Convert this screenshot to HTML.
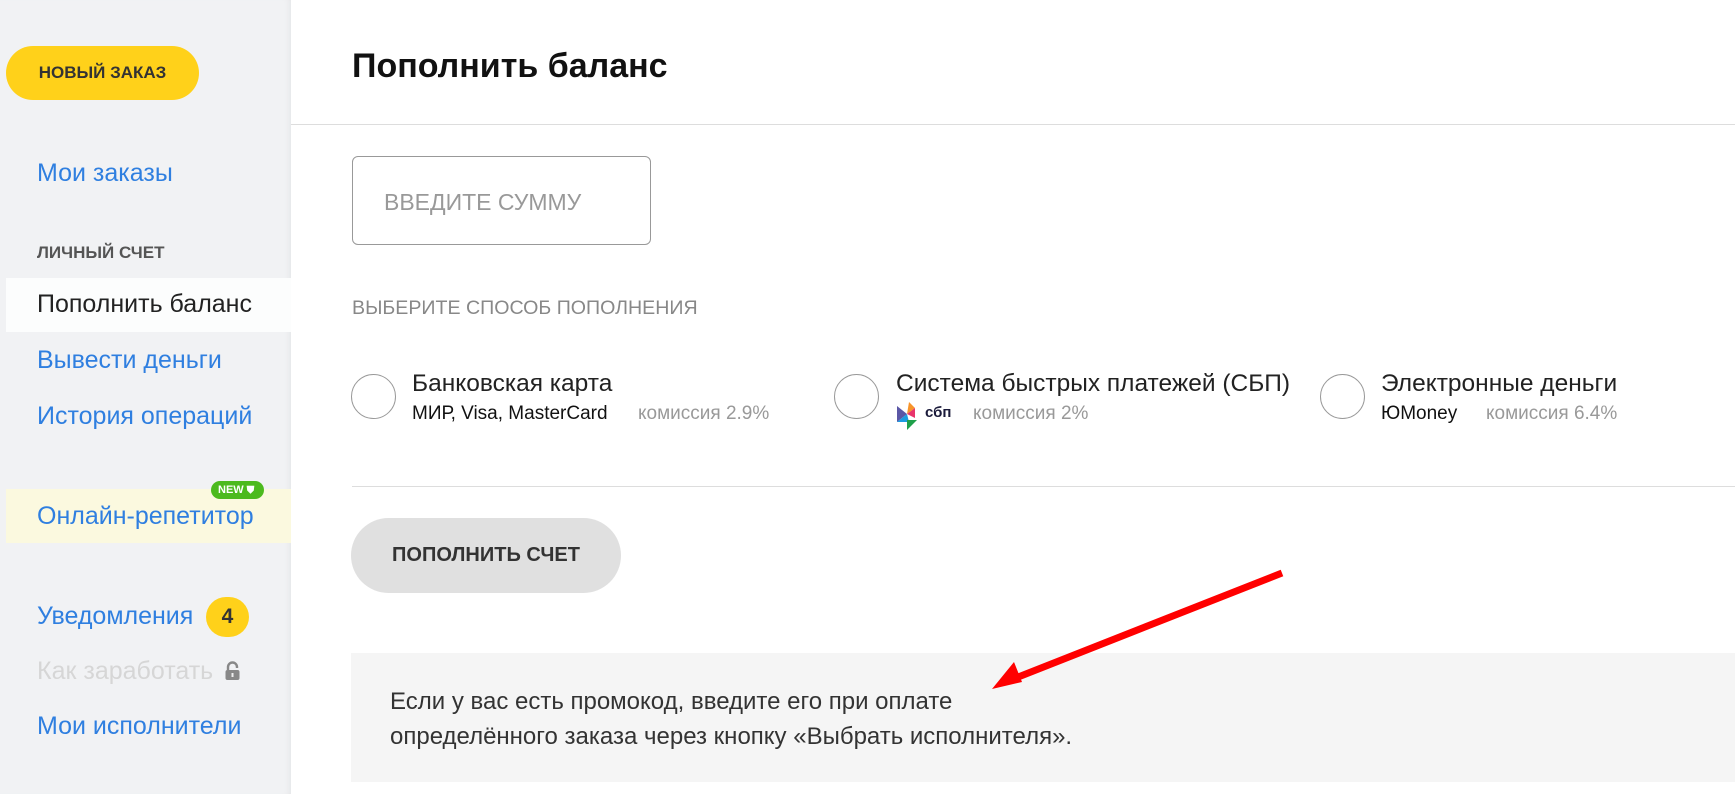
<!DOCTYPE html>
<html><head><meta charset="utf-8"><style>
*{margin:0;padding:0;box-sizing:border-box}
body{width:1735px;height:794px;overflow:hidden;background:#fff;font-family:"Liberation Sans",Arial,sans-serif;position:relative}
.a{position:absolute;white-space:nowrap}
.side{position:absolute;left:0;top:0;width:291px;height:794px;background:#f1f2f4;box-shadow:inset -6px 0 8px -6px rgba(0,0,0,.08)}
.lnk{color:#2f7fe0;font-size:25px;left:37px}
</style></head><body>
<div class="side"></div>
<div class="a" style="left:6px;top:46px;width:193px;height:54px;border-radius:27px;background:#ffd11a;color:#333;font-weight:bold;font-size:17px;line-height:54px;text-align:center">НОВЫЙ ЗАКАЗ</div>
<div class="a lnk" style="top:159px">Мои заказы</div>
<div class="a" style="left:37px;top:243px;font-size:17px;font-weight:bold;color:#555">ЛИЧНЫЙ СЧЕТ</div>
<div class="a" style="left:6px;top:278px;width:285px;height:54px;background:#fcfdfd"></div>
<div class="a" style="left:37px;top:290px;font-size:25px;color:#222">Пополнить баланс</div>
<div class="a lnk" style="top:346px">Вывести деньги</div>
<div class="a lnk" style="top:402px">История операций</div>
<div class="a" style="left:6px;top:489px;width:285px;height:54px;background:#fbf9df"></div>
<div class="a lnk" style="top:502px">Онлайн-репетитор</div>
<div class="a" style="left:211px;top:481px;width:53px;height:18px;border-radius:9px;background:#4cba1e;color:#fff;font-size:11px;font-weight:bold;line-height:18px;padding-left:7px">NEW <span style="font-size:10px">⛊</span></div>
<div class="a lnk" style="top:602px">Уведомления</div>
<div class="a" style="left:206px;top:597px;width:43px;height:40px;border-radius:20px;background:#ffd11a;color:#333;font-weight:bold;font-size:21px;line-height:40px;text-align:center">4</div>
<div class="a" style="left:37px;top:657px;font-size:25px;color:#d6d6d6">Как заработать</div>
<svg class="a" style="left:224px;top:661px" width="17" height="20" viewBox="0 0 17 20"><path d="M4 9V6a4.5 4.5 0 0 1 9 0v1" fill="none" stroke="#888" stroke-width="2.4"/><rect x="1.5" y="9" width="14" height="10" rx="2" fill="#888"/><rect x="7.5" y="12" width="2" height="4" fill="#eee"/></svg>
<div class="a lnk" style="top:712px">Мои исполнители</div>

<div class="a" style="left:352px;top:47px;font-size:34px;font-weight:bold;color:#111">Пополнить баланс</div>
<div class="a" style="left:291px;top:124px;width:1444px;height:1px;background:#ddd"></div>
<div class="a" style="left:352px;top:156px;width:299px;height:89px;border:1px solid #999;border-radius:6px"></div>
<div class="a" style="left:384px;top:189px;font-size:23px;color:#999">ВВЕДИТЕ СУММУ</div>
<div class="a" style="left:352px;top:297px;font-size:19.6px;color:#888">ВЫБЕРИТЕ СПОСОБ ПОПОЛНЕНИЯ</div>

<div class="a" style="left:351px;top:374px;width:45px;height:45px;border-radius:50%;border:1px solid #999"></div>
<div class="a" style="left:412px;top:370px;font-size:24.5px;color:#222">Банковская карта</div>
<div class="a" style="left:412px;top:403px;font-size:19px;color:#111">МИР, Visa, MasterCard</div>
<div class="a" style="left:638px;top:403px;font-size:19px;color:#999">комиссия 2.9%</div>

<div class="a" style="left:834px;top:374px;width:45px;height:45px;border-radius:50%;border:1px solid #999"></div>
<div class="a" style="left:896px;top:370px;font-size:24.5px;color:#222">Система быстрых платежей (СБП)</div>
<svg class="a" style="left:895px;top:400px" width="30" height="32" viewBox="0 0 30 32"><path d="M2 6l10 8-10 8z" fill="#5b57a6"/><path d="M12 14L2 22l12 0z" fill="#1d9be0"/><path d="M12 14L14 2l6 6z" fill="#f7942a"/><path d="M12 14l8-6v10z" fill="#e8346c"/><path d="M12 20h10l-10 10z" fill="#1fa04a"/></svg>
<div class="a" style="left:925px;top:404px;font-size:15px;font-weight:bold;color:#1a1a3a">сбп</div>
<div class="a" style="left:973px;top:403px;font-size:19px;color:#999">комиссия 2%</div>

<div class="a" style="left:1320px;top:374px;width:45px;height:45px;border-radius:50%;border:1px solid #999"></div>
<div class="a" style="left:1381px;top:370px;font-size:24.5px;color:#222">Электронные деньги</div>
<div class="a" style="left:1381px;top:403px;font-size:19px;color:#111">ЮMoney</div>
<div class="a" style="left:1486px;top:403px;font-size:19px;color:#999">комиссия 6.4%</div>

<div class="a" style="left:352px;top:486px;width:1383px;height:1px;background:#ddd"></div>
<div class="a" style="left:351px;top:518px;width:270px;height:75px;border-radius:38px;background:#e0e0e0;color:#333;font-weight:bold;font-size:20px;line-height:75px;text-align:center">ПОПОЛНИТЬ СЧЕТ</div>

<div class="a" style="left:351px;top:653px;width:1384px;height:129px;background:#f5f5f5"></div>
<div class="a" style="left:390px;top:684px;font-size:24px;color:#333;line-height:35px">Если у вас есть промокод, введите его при оплате<br>определённого заказа через кнопку «Выбрать исполнителя».</div>
<svg class="a" style="left:0;top:0" width="1735" height="794"><line x1="1282" y1="573" x2="1008" y2="681" stroke="#f00" stroke-width="7"/><path d="M992 689l22-27 8 20z" fill="#f00"/></svg>
</body></html>
